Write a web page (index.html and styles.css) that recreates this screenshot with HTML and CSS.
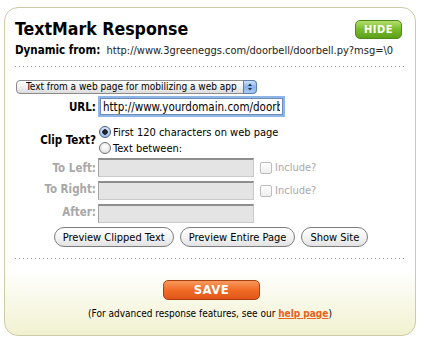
FILE: index.html
```html
<!DOCTYPE html>
<html lang="en">
<head>
    <meta charset="UTF-8">
    <title>TextMark Response</title>
    <link rel="stylesheet" href="styles.css">
</head>
<body>
    <div id="panel">
        <div class="head">
            <h1>TextMark Response</h1>
            <a class="btnHide" href="#">HIDE</a>
        </div>
        <div class="dynamic">
            <b>Dynamic from:</b>
            <span class="dynUrl">http://www.3greeneggs.com/doorbell/doorbell.py?msg=\0</span>
        </div>
        <div class="dots"></div>

        <div class="selectWrap">
            <select class="source">
                <option>Text from a web page for mobilizing a web app</option>
            </select>
            <span class="arrows">
                <svg width="12" height="12" viewBox="0 0 12 12">
                    <path d="M6 2.5 L8 5 L4 5 Z" fill="#1c2e4a"/>
                    <path d="M6 9.5 L8 7 L4 7 Z" fill="#1c2e4a"/>
                </svg>
            </span>
        </div>

        <div class="form">
            <label class="lbl">URL:</label>
            <div><input class="url" type="text" value="http://www.yourdomain.com/doorbell"></div>

            <label class="lbl clip">Clip Text?</label>
            <div class="radios">
                <label class="opt"><input type="radio" name="clip" checked> First 120 characters on web page</label>
                <label class="opt"><input type="radio" name="clip"> Text between:</label>
            </div>

            <label class="lbl off first">To Left:</label>
            <div class="field first">
                <input class="clipbox" type="text" disabled>
                <label class="inc"><input type="checkbox" disabled> Include?</label>
            </div>

            <label class="lbl off">To Right:</label>
            <div class="field">
                <input class="clipbox" type="text" disabled>
                <label class="inc"><input type="checkbox" disabled> Include?</label>
            </div>

            <label class="lbl off">After:</label>
            <div class="field">
                <input class="clipbox" type="text" disabled>
            </div>
        </div>

        <div class="btnRow">
            <button class="pill">Preview Clipped Text</button>
            <button class="pill">Preview Entire Page</button>
            <button class="pill">Show Site</button>
        </div>
        <div class="dots dots2"></div>

        <div class="saveRow">
            <a class="btnSave" href="#">SAVE</a>
        </div>
        <p class="note">(For advanced response features, see our <a href="#">help page</a>)</p>
    </div>
</body>
</html>
```

FILE: styles.css
```css
body {
    margin: 0;
    font-family: "DejaVu Sans Condensed", "DejaVu Sans", sans-serif;
    font-size: 11px;
    color: #000;
    background: #fff;
}

#panel {
    box-sizing: border-box;
    width: 412px;
    height: 329px;
    margin: 7px 0 0 4px;
    padding: 11px 10px 0 10px;
    border: 1px solid #cbcba6;
    border-radius: 14px;
    background: linear-gradient(to bottom, #fff 80%, #f1f1d0);
}

.head {
    display: flex;
    justify-content: space-between;
    align-items: flex-start;
    height: 20px;
}

h1 {
    margin: 0;
    font-size: 17.6px;
    line-height: 20px;
    font-weight: bold;
}

.btnHide {
    display: block;
    box-sizing: border-box;
    width: 47px;
    height: 19px;
    margin: 1px 3px 0 0;
    border: 1px solid #4d8a18;
    border-radius: 5px;
    background: linear-gradient(to bottom, #b3de6c, #78bb2a 50%, #5d9f1a);
    color: #fff;
    font-size: 11px;
    font-weight: bold;
    line-height: 17px;
    text-align: center;
    text-decoration: none;
    letter-spacing: 0.5px;
}

.dynamic {
    margin-top: 4px;
    line-height: 14px;
    font-size: 11px;
}

.dynamic b {
    font-size: 11.5px;
}

.dynUrl {
    margin-left: 3px;
    color: #222;
}

.dots {
    height: 1px;
    margin: 8px 1px 0 0;
    background: linear-gradient(to right, #999 1px, transparent 1px) 0 0 / 4px 1px repeat-x;
}

/* select */
.selectWrap {
    position: relative;
    width: 241px;
    height: 14px;
    margin: 13px 0 0 1px;
}

.source {
    appearance: none;
    box-sizing: border-box;
    width: 100%;
    height: 14px;
    margin: 0;
    padding: 0 0 0 9px;
    border: 1px solid #8c8c8c;
    border-radius: 4px;
    background: linear-gradient(to bottom, #fff, #f0f0f0 50%, #dcdcdc);
    font-family: "DejaVu Sans Condensed", "DejaVu Sans", sans-serif;
    font-size: 10px;
    line-height: 12px;
    color: #000;
}

.arrows {
    position: absolute;
    top: 0;
    right: 0;
    box-sizing: border-box;
    width: 14px;
    height: 14px;
    border: 1px solid #5a7fb0;
    border-radius: 0 4px 4px 0;
    background: linear-gradient(to bottom, #cfe3fb, #87b2ea 50%, #a8cbf5);
}

.arrows svg {
    display: block;
    margin: 0;
}

/* form grid */
.form {
    display: grid;
    grid-template-columns: 81px 1fr;
    column-gap: 2px;
    margin-top: 2px;
}

.lbl {
    font-weight: bold;
    font-size: 11.5px;
    text-align: right;
    align-self: center;
}

.lbl.off {
    color: #a8a8a8;
}

.url {
    box-sizing: border-box;
    width: 183px;
    height: 17px;
    margin: 2px;
    padding: 0 2px;
    border: 1px solid #6f8db8;
    outline: 2px solid #8db6e6;
    font-family: "DejaVu Sans Condensed", "DejaVu Sans", sans-serif;
    font-size: 11.5px;
    color: #000;
    display: block;
}

.clip {
    margin-top: 6px;
}

.radios {
    margin-top: 7px;
}

.opt {
    display: flex;
    align-items: center;
    height: 16px;
    font-size: 11px;
}

.opt input {
    appearance: none;
    box-sizing: border-box;
    width: 12px;
    height: 12px;
    margin: 0 2px 0 1px;
    border: 1px solid #6e6e6e;
    border-radius: 50%;
    background: radial-gradient(circle at 50% 35%, #fff, #dcdcdc);
}

.opt input:checked {
    border-color: #4b5f7e;
    background: radial-gradient(circle, #1b2535 2.5px, transparent 3px), linear-gradient(to bottom, #d6e4f6, #9fbde6);
}

.field {
    display: flex;
    align-items: center;
    margin-top: 4px;
}

.field.first,
.lbl.first {
    margin-top: 2px;
}

.clipbox {
    box-sizing: border-box;
    width: 156px;
    height: 19px;
    margin: 0;
    border: 1px solid #c9c9c9;
    border-top: 2px solid #8e8e8e;
    border-left: 1px solid #a3a3a3;
    background: #e4e4e4;
}

.inc {
    display: flex;
    align-items: center;
    margin-left: 6px;
    color: #a8a8a8;
    font-size: 11px;
}

.inc input {
    appearance: none;
    box-sizing: border-box;
    width: 12px;
    height: 12px;
    margin: 0 3px 0 0;
    border: 1px solid #bdbdbd;
    border-radius: 2px;
    background: linear-gradient(to bottom, #fff, #eee);
}

/* buttons */
.btnRow {
    display: flex;
    justify-content: center;
    gap: 6px;
    margin: 4px 0 0 2px;
}

.pill {
    box-sizing: border-box;
    height: 20px;
    padding: 0 8px;
    border: 1px solid #7d7d7d;
    border-radius: 10px;
    background: linear-gradient(to bottom, #fff, #f4f4f4 50%, #e2e2e2);
    font-family: "DejaVu Sans Condensed", "DejaVu Sans", sans-serif;
    font-size: 11px;
    color: #000;
}

.dots2 {
    margin-top: 11px;
}

.saveRow {
    display: flex;
    justify-content: center;
    margin: 21px 0 0 3px;
}

.btnSave {
    display: block;
    box-sizing: border-box;
    width: 97px;
    height: 20px;
    border: 1px solid #a9400f;
    border-radius: 5px;
    background: linear-gradient(to bottom, #f99a5e, #f06c26 50%, #e1561a);
    color: #fff;
    font-size: 13px;
    font-weight: bold;
    line-height: 18px;
    text-align: center;
    text-decoration: none;
    letter-spacing: 0.5px;
}

.note {
    margin: 7px 0 0 0;
    line-height: 14px;
    font-size: 10px;
    text-align: center;
}

.note a {
    color: #e8611f;
    font-weight: bold;
}
```
